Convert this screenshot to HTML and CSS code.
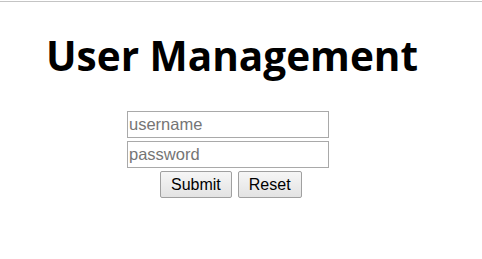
FILE: index.html
```html
<!DOCTYPE html>
<html lang="en">
<head>
    <meta charset="UTF-8">
    <meta name="viewport" content="width=device-width, initial-scale=1.0">
    <title>User Management</title>
    <link rel="stylesheet" href="styles.css">
</head>
<body>
    <div class="topline"></div>
    <div class="container">
        <h1>User Management</h1>
        <form class="login-form" onsubmit="return false">
            <input type="text" placeholder="username">
            <input type="password" placeholder="password">
            <div class="buttons">
                <button type="submit">Submit</button>
                <button type="reset">Reset</button>
            </div>
        </form>
    </div>
</body>
</html>
```

FILE: styles.css
```css
body {
    margin: 0;
    background: #fff;
    font-family: "Liberation Sans", Arial, sans-serif;
}
.topline {
    height: 1px;
    margin-top: 1px;
    background: #c4c4c4;
}
.container {
    padding-top: 27px;
}
h1 {
    font-family: "Open Sans", sans-serif;
    font-weight: 700;
    font-size: 40.5px;
    line-height: 54px;
    margin: 0 0 28px 46px;
    color: #000;
}
.login-form {
    display: flex;
    flex-direction: column;
    align-items: flex-start;
    gap: 3px;
    padding-left: 127px;
}
.login-form input {
    box-sizing: border-box;
    width: 202px;
    height: 27px;
    border: 1px solid #a9a9a9;
    padding: 0 1px;
    font-family: "Liberation Sans", Arial, sans-serif;
    font-size: 16.5px;
}
.login-form input::placeholder {
    color: #757575;
}
.buttons {
    display: flex;
    gap: 6px;
    margin-left: 33px;
}
.buttons button {
    box-sizing: border-box;
    height: 27px;
    padding: 0 10px;
    border: 1px solid #a0a0a0;
    border-radius: 2px;
    background: linear-gradient(#f6f6f6, #e3e3e3);
    font-family: "Liberation Sans", Arial, sans-serif;
    font-size: 16px;
    color: #000;
}
```
